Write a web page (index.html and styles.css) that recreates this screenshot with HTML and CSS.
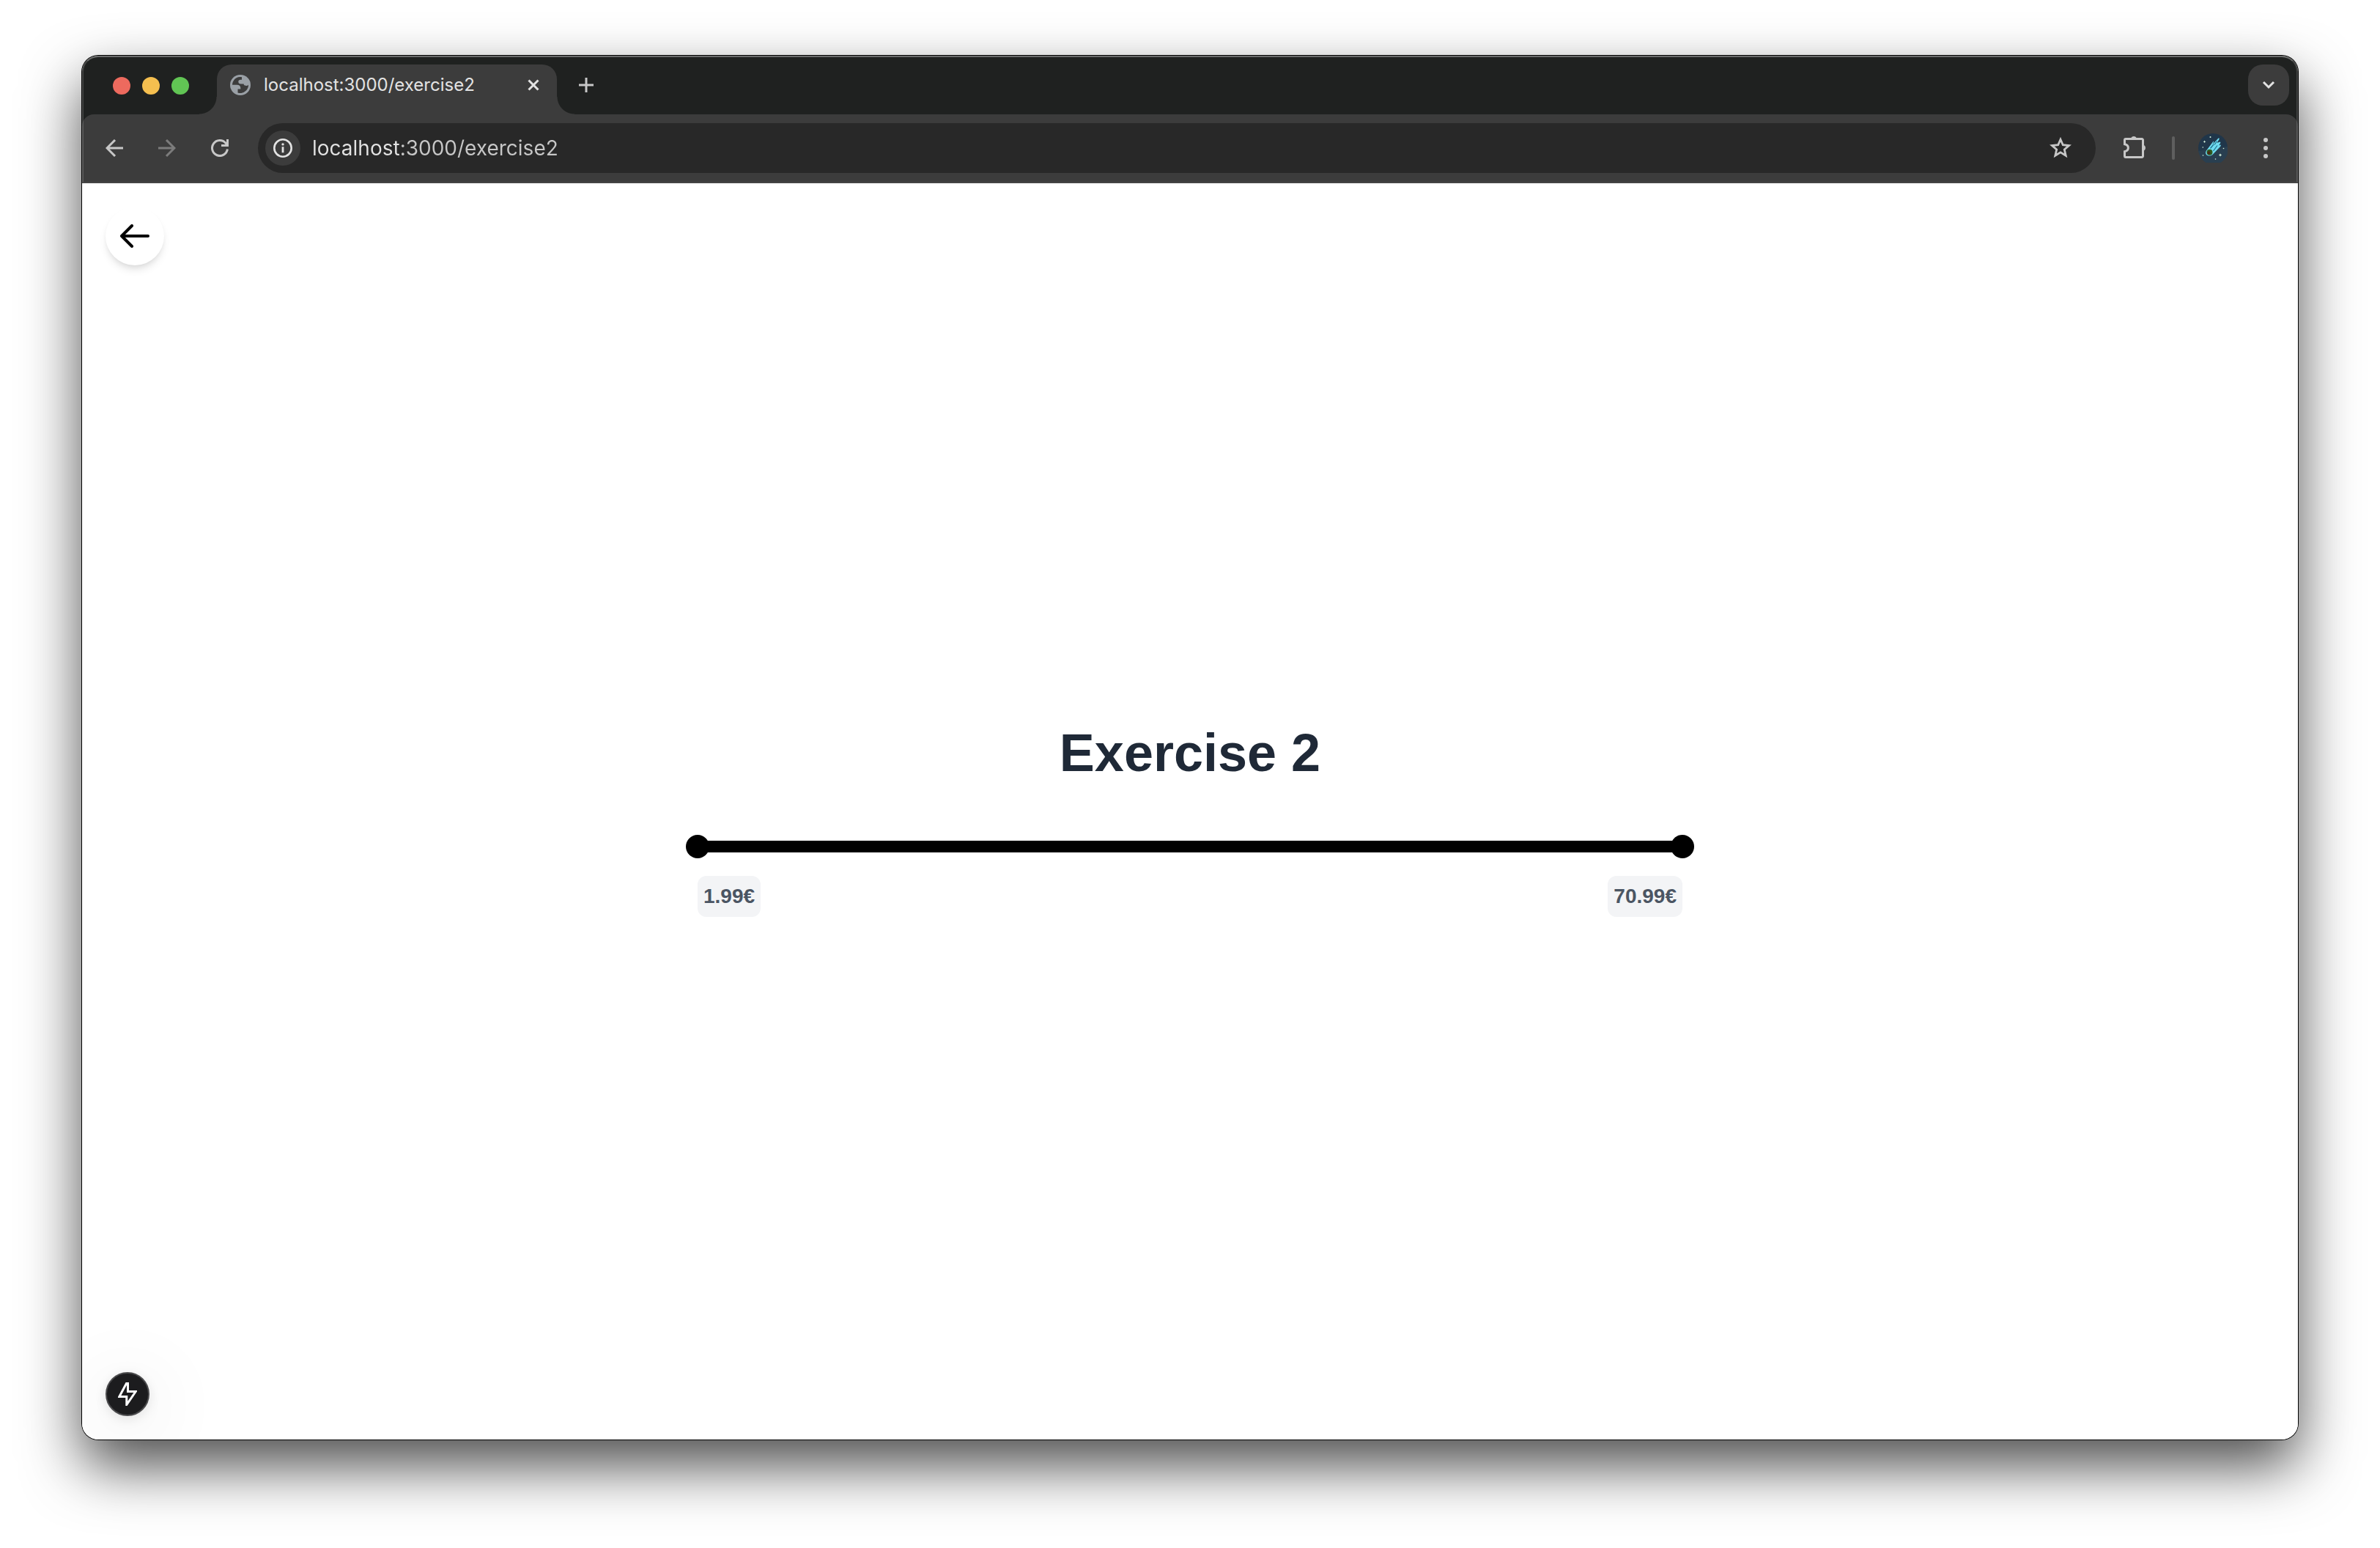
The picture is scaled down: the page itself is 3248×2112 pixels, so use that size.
FILE: index.html
```html
<!DOCTYPE html>
<html lang="en">
<head>
<meta charset="utf-8">
<title>localhost:3000/exercise2</title>
<link rel="stylesheet" href="styles.css">
</head>
<body>
<div class="window">
  <header class="chrome">
    <div class="tab-strip">
      <div class="traffic-lights">
        <button class="light light-close" aria-label="Close window"></button>
        <button class="light light-minimize" aria-label="Minimize window"></button>
        <button class="light light-zoom" aria-label="Zoom window"></button>
      </div>
      <div class="tab">
        <svg class="globe" viewBox="0 0 28 28" aria-hidden="true">
          <circle cx="14" cy="14" r="14" fill="#9aa0a6"/>
          <path d="M16 3.200C15 3 14 3 13 3.100C7.500 3.600 3.300 8 3 13.800H9.500C12.300 13.800 14.300 15.300 14.300 18V19.500H10.500V24.500C16 26.300 22 23.300 24.200 18C24.900 16.400 25.100 15 25 13.700C24 15 22.500 15 20.800 14.800C19.500 14.700 18.600 14 18.600 12.600H14.600C12.500 12.600 11.300 11.300 11.300 9.500C11.300 7.600 12.500 6.800 14.300 6.800H16Z" fill="#3c3c3c"/>
        </svg>
        <span class="tab-title">localhost:3000/exercise2</span>
        <button class="icon-button tab-close" aria-label="Close tab">
          <svg width="16" height="16" viewBox="0 0 16 16"><path d="M1.500 1.500l13 13M14.500 1.500l-13 13" stroke="#e3e3e3" stroke-width="3"/></svg>
        </button>
      </div>
      <button class="icon-button new-tab" aria-label="New tab">
        <svg width="20" height="20" viewBox="0 0 20 20"><path d="M10 0v20M0 10h20" stroke="#c7c7c7" stroke-width="3"/></svg>
      </button>
      <button class="tab-search" aria-label="Search tabs">
        <svg width="18" height="12" viewBox="0 0 18 12"><path d="M2 2l7 7 7-7" fill="none" stroke="#e3e3e3" stroke-width="3"/></svg>
      </button>
    </div>
    <div class="toolbar">
      <button class="icon-button" aria-label="Back">
        <svg width="24" height="24" viewBox="0 0 24 24"><path d="M24 12H2M13 1L2 12l11 11" fill="none" stroke="#c7c7c7" stroke-width="3"/></svg>
      </button>
      <button class="icon-button" aria-label="Forward" disabled>
        <svg width="24" height="24" viewBox="0 0 24 24"><path d="M0 12h22M11 1l11 11-11 11" fill="none" stroke="#7c7c7c" stroke-width="3"/></svg>
      </button>
      <button class="icon-button" aria-label="Reload">
        <svg width="24" height="24" viewBox="0 0 24 24"><path d="M22.400 13.500A10.500 10.500 0 1 1 20 5.200L22.500 8" fill="none" stroke="#c7c7c7" stroke-width="3"/><path d="M24 0v10H14V7h7V0z" fill="#c7c7c7"/></svg>
      </button>
      <div class="omnibox">
        <button class="site-info" aria-label="View site information">
          <svg width="26" height="26" viewBox="0 0 26 26"><circle cx="13" cy="13" r="11.700" fill="none" stroke="#e3e3e3" stroke-width="2.600"/><path d="M13 11.300v8" stroke="#e3e3e3" stroke-width="2.800"/><circle cx="13" cy="7.900" r="1.700" fill="#e3e3e3"/></svg>
        </button>
        <input class="url" type="text" value="localhost:3000/exercise2" aria-label="Address" spellcheck="false">
        <button class="icon-button" aria-label="Bookmark this tab">
          <svg width="32" height="32" viewBox="0 0 32 32"><path d="M16 4.200L19.300 11.700L27.600 12.500L21.300 18L23.200 26.300L16 21.900L8.800 26.300L10.700 18L4.400 12.500L12.700 11.700Z" fill="none" stroke="#c7c7c7" stroke-width="2.800"/></svg>
        </button>
      </div>
      <div class="actions">
        <button class="icon-button" aria-label="Extensions">
          <svg class="puzzle" width="32" height="32" viewBox="0 2 32 32"><path d="M3 5.500H25A1.500 1.500 0 0 1 26.500 7V29A1.500 1.500 0 0 1 25 30.500H3A1.500 1.500 0 0 1 1.500 29V22.700C8 21.500 8 14 1.500 12.800V7A1.500 1.500 0 0 1 3 5.500Z" fill="none" stroke="#c7c7c7" stroke-width="3"/><path d="M10 5a4.200 4.200 0 0 1 8 0zM27 13.800a4.200 4.200 0 0 1 0 8z" fill="#c7c7c7"/></svg>
        </button>
        <span class="divider"></span>
        <button class="icon-button avatar" aria-label="Profile">
          <svg width="40" height="40" viewBox="0 0 40 40">
            <circle cx="20" cy="20" r="20" fill="#20364a"/>
            <path d="M0 24Q15 21 40 18A20 20 0 0 1 1 27Z" fill="#293f50"/>
            <path d="M11 23.500L20 11.500Q21.500 10 21 12L19.500 15L27.500 6.500Q29.500 6 28.500 8L25.500 13L29.500 11.500Q31 12 30 13.500L28 16.500L30.500 15.500Q31.500 16.500 30 18L19.500 29C14.500 33 7.500 29 11 23.500Z" fill="#6fdcf0"/>
            <path d="M16.500 20.500L21 15M20.500 24L26 16.500M22 15.500L25.500 10.500" stroke="#20708a" stroke-width="1.200"/>
            <circle cx="15.500" cy="25.800" r="4" fill="#2f5d20"/><circle cx="14.500" cy="26.500" r="2.200" fill="#4a2a16"/>
            <g fill="#d8f5df"><path d="M8.500 9.500l.6 1.200 1.200.6-1.200.6-.6 1.200-.6-1.200-1.200-.6 1.200-.6zM30 27.300l.7 1.500 1.500.7-1.500.7-.7 1.500-.7-1.500-1.500-.7 1.500-.7z"/><circle cx="16.500" cy="5" r="1"/><circle cx="6.300" cy="19" r=".8"/><circle cx="6.500" cy="30" r=".8"/><circle cx="34.500" cy="20.500" r=".8"/><circle cx="23.500" cy="35" r=".8"/></g>
          </svg>
        </button>
        <button class="icon-button menu" aria-label="Menu">
          <svg width="8" height="28" viewBox="0 0 8 28" fill="#c7c7c7"><circle cx="4" cy="3" r="3"/><circle cx="4" cy="14" r="3"/><circle cx="4" cy="25" r="3"/></svg>
        </button>
      </div>
    </div>
  </header>
  <main class="page">
    <a class="back-link" href="#" aria-label="Go back">
      <svg width="40" height="32" viewBox="0 0 40 32"><path d="M38 16H2M16 2L2 16l14 14" fill="none" stroke="#000" stroke-width="4" stroke-linecap="round" stroke-linejoin="round"/></svg>
    </a>
    <section class="exercise">
      <h1 class="title">Exercise 2</h1>
      <div class="range">
        <div class="track">
          <input class="thumb" id="price-min" type="range" min="0" max="100" value="0">
          <input class="thumb" id="price-max" type="range" min="0" max="100" value="100">
        </div>
        <div class="values">
          <label class="value" for="price-min">1.99€</label>
          <label class="value" for="price-max">70.99€</label>
        </div>
      </div>
    </section>
    <button class="dev-tools" aria-label="Open dev tools">
      <svg width="26" height="32" viewBox="0 0 26 32"><path d="M11.500 1.500L1.800 19.500H11.800V30.500L24.200 12.500H13.500V1.500Z" fill="none" stroke="#fff" stroke-width="3"/></svg>
    </button>
  </main>
</div>
</body>
</html>
```
FILE: styles.css
```css
* { box-sizing: border-box; }

body {
  display: flex;
  min-height: 100vh;
  margin: 0;
  padding: 76px 112px 148px;
  background: #fff;
  font-family: "Liberation Sans", Arial, sans-serif;
}

button { border: 0; padding: 0; background: none; }
svg { display: block; }

.window {
  flex: 1;
  display: flex;
  flex-direction: column;
  border-radius: 22px;
  background: #fff;
  box-shadow: 0 0 0 1px #000, 0 36px 80px rgba(0, 0, 0, 0.7);
}

/* browser chrome */
.chrome {
  position: relative;
  overflow: hidden;
  border-radius: 22px 22px 0 0;
  background: #1f2120;
  font-family: Inter, sans-serif;
}

.chrome::after {
  content: "";
  position: absolute;
  inset: 0;
  border: 2px solid rgba(255, 255, 255, 0.16);
  border-top-color: rgba(255, 255, 255, 0.34);
  border-bottom-color: rgba(255, 255, 255, 0.05);
  border-radius: 22px 22px 0 0;
  pointer-events: none;
}

.tab-strip {
  display: flex;
  align-items: center;
  height: 80px;
  padding: 0 12px 0 42px;
}

.traffic-lights {
  display: flex;
  gap: 16px;
  margin-right: 38px;
  padding-top: 2px;
}

.light { width: 24px; height: 24px; border-radius: 50%; }
.light-close { background: #ed6a5e; }
.light-minimize { background: #f5bf4f; }
.light-zoom { background: #61c554; }

.tab {
  position: relative;
  align-self: flex-end;
  display: flex;
  align-items: center;
  width: 464px;
  height: 68px;
  padding: 0 20px 12px 18px;
  border-radius: 20px 20px 0 0;
  background: #3c3c3c;
}

.tab::before,
.tab::after {
  content: "";
  position: absolute;
  bottom: 0;
  width: 24px;
  height: 24px;
}

.tab::before {
  right: 100%;
  background: radial-gradient(circle at 0 0, transparent 23px, #3c3c3c 24px);
}

.tab::after {
  left: 100%;
  background: radial-gradient(circle at 100% 0, transparent 23px, #3c3c3c 24px);
}

.globe { width: 28px; height: 28px; }

.tab-title {
  flex: 1;
  margin-left: 18px;
  font-size: 24px;
  line-height: 32px;
  color: #e3e3e3;
}

.icon-button {
  display: flex;
  flex: none;
  align-items: center;
  justify-content: center;
  width: 32px;
  height: 32px;
}

.tab-close { width: 24px; }
.new-tab { margin-left: 24px; }

.tab-search {
  display: flex;
  align-items: center;
  justify-content: center;
  width: 56px;
  height: 56px;
  margin-left: auto;
  border-radius: 20px;
  background: #3c3c3c;
}

.toolbar {
  display: flex;
  align-items: center;
  gap: 40px;
  height: 94px;
  padding: 0 28px 2px;
  border-radius: 16px 16px 0 0;
  background: #3c3c3c;
}

.omnibox {
  flex: 1;
  display: flex;
  align-items: center;
  height: 68px;
  margin-left: -4px;
  padding: 0 32px 0 10px;
  border-radius: 34px;
  background: #282828;
}

.site-info {
  display: flex;
  align-items: center;
  justify-content: center;
  width: 48px;
  height: 48px;
  border-radius: 50%;
  background: #3c3c3c;
}

/* host name is brighter than the port and path */
.url {
  flex: 1;
  height: 40px;
  margin-left: 16px;
  padding: 0;
  border: 0;
  outline: 0;
  background: linear-gradient(to right, #e3e3e3 122px, #c7c7c7 122px) text;
  font: 28px/40px Inter, sans-serif;
  color: #e3e3e3;
  -webkit-text-fill-color: transparent;
}

.actions {
  display: flex;
  align-items: center;
  gap: 32px;
  margin-left: -2px;
}

.puzzle { overflow: visible; }

.divider {
  width: 4px;
  height: 32px;
  margin-left: 2px;
  border-radius: 2px;
  background: #5f5f5f;
}

.avatar { width: 40px; height: 40px; }
.menu { margin-left: 4px; }

/* page */
.page {
  position: relative;
  flex: 1;
  display: flex;
  align-items: center;
  justify-content: center;
  padding: 24px 32px 0;
  overflow: hidden;
  border-radius: 0 0 22px 22px;
  background: #fff;
}

.back-link {
  position: absolute;
  top: 32px;
  left: 32px;
  display: flex;
  align-items: center;
  justify-content: center;
  width: 80px;
  height: 80px;
  border-radius: 50%;
  background: #fff;
  box-shadow: 0 8px 12px -2px rgba(0, 0, 0, 0.1), 0 4px 8px -4px rgba(0, 0, 0, 0.1);
}

.exercise {
  flex: 1;
  max-width: 1344px;
}

.title {
  margin: 0 0 80px;
  font-size: 72px;
  line-height: 80px;
  text-align: center;
  color: #1f2937;
}

.track {
  position: relative;
  height: 16px;
  border-radius: 8px;
  background: #000;
}

.thumb {
  position: absolute;
  top: -8px;
  left: -16px;
  width: calc(100% + 32px);
  height: 32px;
  margin: 0;
  background: none;
  appearance: none;
  pointer-events: none;
}

.thumb::-webkit-slider-thumb {
  width: 32px;
  height: 32px;
  border-radius: 50%;
  background: #000;
  appearance: none;
  pointer-events: auto;
  cursor: grab;
}

.values {
  display: flex;
  justify-content: space-between;
  margin-top: 32px;
}

.value {
  padding: 8px;
  border-radius: 12px;
  background: #f3f4f6;
  font-size: 28px;
  font-weight: 700;
  line-height: 40px;
  color: #4b5563;
}

.dev-tools {
  position: absolute;
  bottom: 32px;
  left: 32px;
  display: flex;
  align-items: center;
  justify-content: center;
  width: 60px;
  height: 60px;
  border: 2px solid #4a4a4c;
  border-radius: 50%;
  background: #1c1c1e;
  box-shadow: 0 4px 16px rgba(0, 0, 0, 0.1), 0 16px 112px rgba(0, 0, 0, 0.14);
}
```
